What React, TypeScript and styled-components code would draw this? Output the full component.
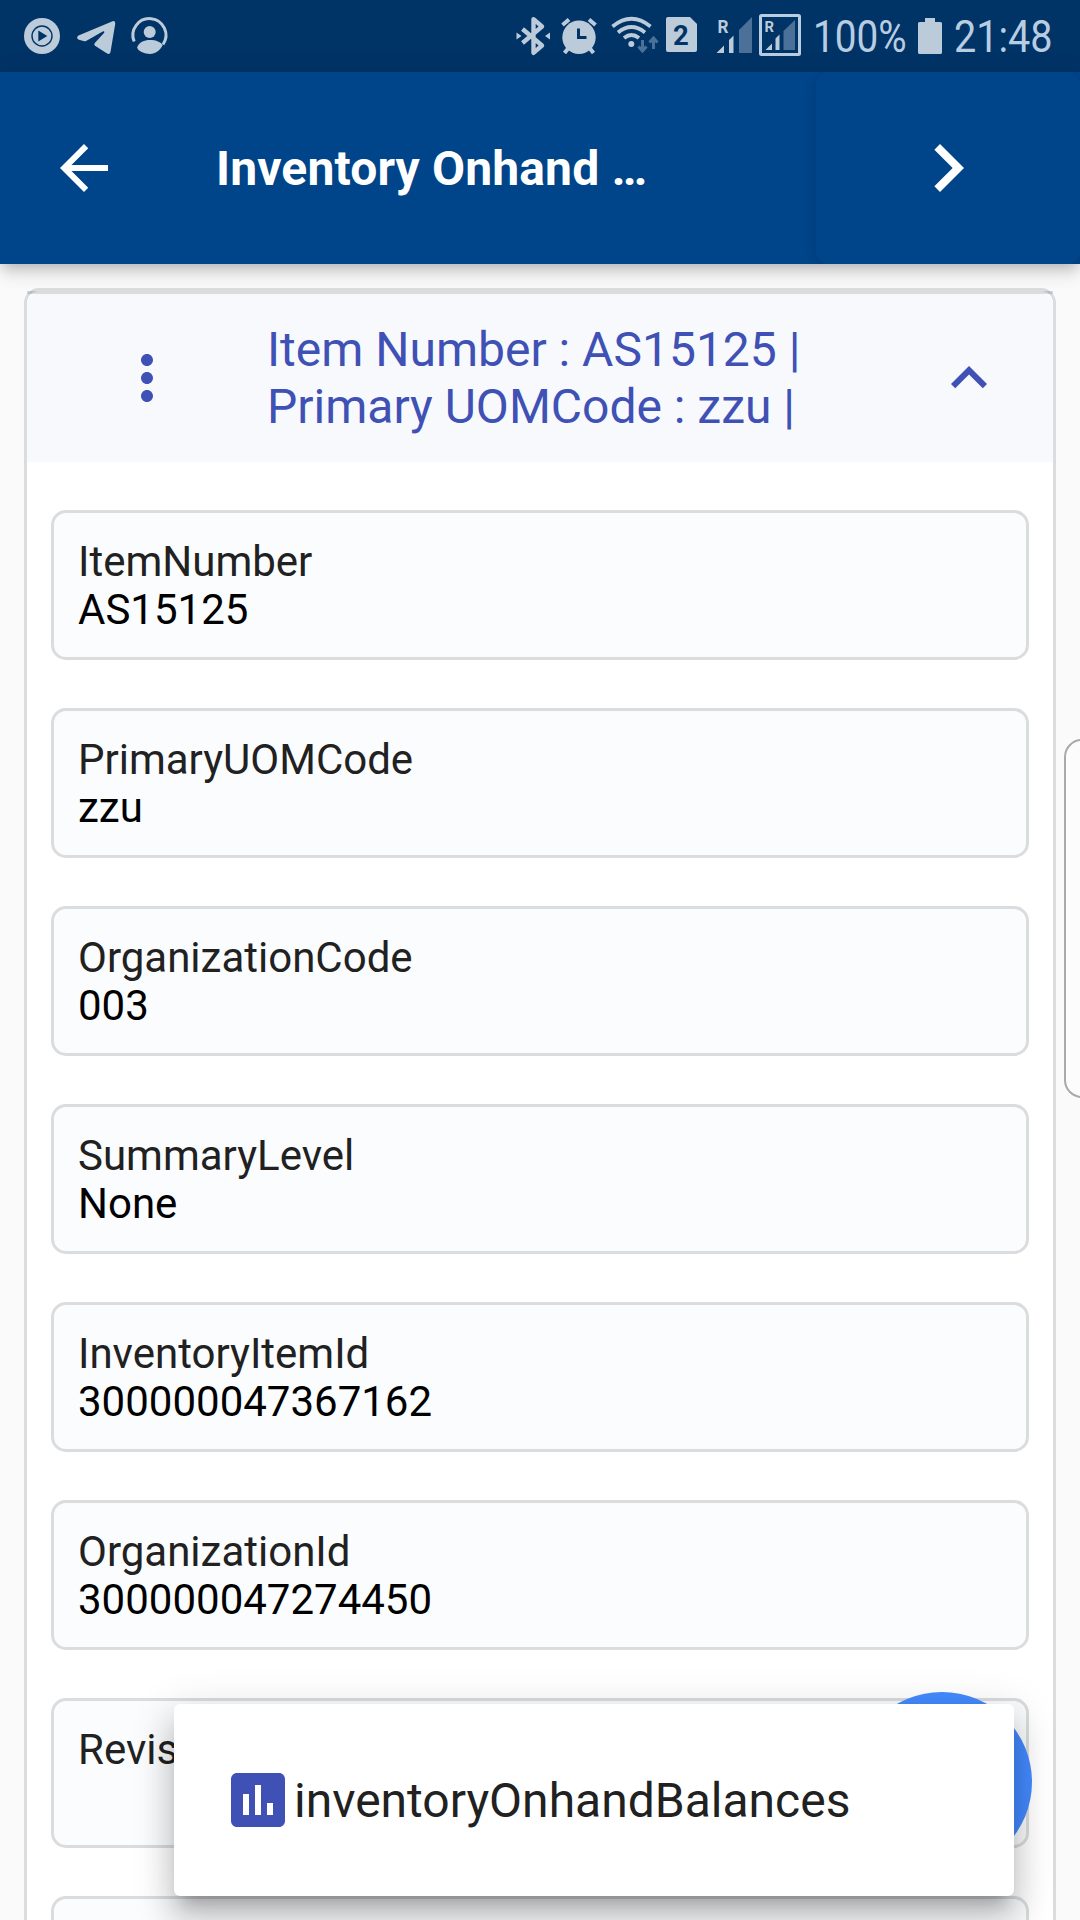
import React from "react";
import styled, { createGlobalStyle } from "styled-components";

const Global = createGlobalStyle`
  * { box-sizing: border-box; }
  html, body { margin: 0; height: 100%; }
  body { background: #fafafa; font-family: Roboto, "Noto Sans", sans-serif; overflow: hidden; }
  svg { display: block; }
`;

const Screen = styled.div`
  position: relative;
  display: flex;
  flex-direction: column;
  width: 1080px;
  height: 1920px;
  overflow: hidden;
  background: #fafafa;
`;

const StatusBar = styled.header`
  display: flex;
  justify-content: space-between;
  flex: none;
  height: 72px;
  background: #003366;
  color: #bccbda;
`;

const StatusGroup = styled.div`
  display: flex;
`;

const StatusText = styled.span<{ $width: number; $squeeze: number }>`
  display: block;
  width: ${(p) => p.$width}px;
  font-size: 45px;
  line-height: 74px;
  white-space: nowrap;
  color: #b9cde2;
  transform: scaleX(${(p) => p.$squeeze});
  transform-origin: left center;
`;

const BatteryGroup = styled.div`
  width: 36px;
`;

const AppBar = styled.nav`
  position: relative;
  z-index: 1;
  display: flex;
  align-items: center;
  flex: none;
  height: 192px;
  padding-left: 48px;
  background: #004489;
  color: #fff;
  box-shadow: 0 6px 12px -3px rgba(0, 0, 0, 0.2), 0 12px 15px rgba(0, 0, 0, 0.07), 0 3px 30px rgba(0, 0, 0, 0.06);
`;

const Title = styled.h1`
  flex: 1;
  margin: 0 0 0 96px;
  padding-top: 2px;
  font-size: 48px;
  font-weight: 700;
  letter-spacing: 0.14px;
  line-height: 60px;
  white-space: nowrap;
`;

const NextButton = styled.button`
  display: flex;
  align-items: center;
  justify-content: center;
  width: 264px;
  height: 192px;
  padding: 0;
  border: 0;
  border-radius: 12px;
  background: #004489;
  color: #fff;
  box-shadow: 0 3px 12px rgba(0, 0, 0, 0.13);
  clip-path: inset(0 0 0 -20px);
`;

const Card = styled.main`
  flex: none;
  width: 1032px;
  height: 1700px;
  margin: 24px 0 0 24px;
  border: 3px solid rgba(31, 43, 53, 0.165);
  border-radius: 15px;
  background: #fff;
`;

const CardRule = styled.div`
  height: 3px;
  background: rgba(31, 43, 53, 0.165);
`;

const CardHeader = styled.div`
  display: grid;
  grid-template-columns: 84px 156px 582px 1fr;
  align-items: center;
  height: 168px;
  border-radius: 9px 9px 0 0;
  background: #f7f9fc;
  color: #3f51b5;
`;

const HeaderIcon = styled.div`
  grid-column: 2;
`;

const ExpandIcon = styled.div`
  padding-left: 84px;
`;

const CardTitle = styled.div`
  font-size: 48px;
  line-height: 57px;
  white-space: nowrap;
`;

const CardTitleLine = styled.div``;

const FieldList = styled.div`
  display: flex;
  flex-direction: column;
  gap: 48px;
  padding: 48px 24px 0;
`;

const Field = styled.section`
  height: 150px;
  padding: 25px 24px 0;
  border: 3px solid #dadcde;
  border-radius: 15px;
  background: #fbfcfe;
  font-size: 42px;
  line-height: 48px;
`;

const FieldLabel = styled.div`
  color: #212121;
`;

const FieldValue = styled.div`
  color: #000;
`;

const ScrollThumb = styled.div`
  position: absolute;
  top: 739px;
  right: -20px;
  width: 36px;
  height: 359px;
  border: 2px solid #a9a9a9;
  border-radius: 18px;
  background: #fcfcfc;
`;

const Fab = styled.div`
  position: absolute;
  top: 1692px;
  left: 852px;
  width: 180px;
  height: 180px;
  border-radius: 50%;
  background: #448aff;
`;

const Popup = styled.div`
  position: absolute;
  top: 1704px;
  left: 174px;
  display: flex;
  align-items: center;
  width: 840px;
  height: 192px;
  padding-left: 48px;
  border-radius: 6px;
  background: #fff;
  color: #212121;
  font-size: 48px;
  white-space: nowrap;
  box-shadow: 0 15px 15px -9px rgba(0, 0, 0, 0.2), 0 24px 30px 3px rgba(0, 0, 0, 0.14),
    0 9px 42px 6px rgba(0, 0, 0, 0.12);
`;

const PopupIcon = styled.div`
  color: #3f51b5;
`;

const fields: [string, string][] = [
  ["ItemNumber", "AS15125"],
  ["PrimaryUOMCode", "zzu"],
  ["OrganizationCode", "003"],
  ["SummaryLevel", "None"],
  ["InventoryItemId", "300000047367162"],
  ["OrganizationId", "300000047274450"],
  ["Revision", ""],
  ["", ""],
];

const Glyph = ({ size, d }: { size: number; d: string }) => (
  <svg width={size} height={size} viewBox="0 0 24 24" fill="currentColor">
    <path d={d} />
  </svg>
);

const NotificationIcons = () => (
  <svg width="180" height="72" viewBox="0 0 180 72" fill="#bccbda">
    <circle cx="42" cy="36" r="18" />
    <circle cx="42" cy="36" r="10" fill="none" stroke="#003366" strokeWidth="1.4" />
    <path d="M38.3 30.5v11l9-5.5z" fill="#003366" />
    <path d="M78.5 35.5 112 21.4q3.5-1.2 3.2 2.6l-4.7 28q-.8 3-3.8 1.2L95 45.8q-1.5-1.2-.2-2.8l9.4-10.3q.5-2-1.5-1.2L86.5 40.7q-1.5.8-3.2.4l-5-1.7q-2.5-2 .2-3.9z" />
    <path d="M134.2 41.5A16.5 16.5 0 1 1 163 44.5" fill="none" stroke="#bccbda" strokeWidth="3" />
    <circle cx="149.7" cy="32" r="6" />
    <path d="M137.2 47.5C139 42 144 40 150 40s11 2 12.7 5.3C160 50.5 155.5 54 150 54s-12.5-3-12.8-6.5z" />
  </svg>
);

const SystemIcons = () => (
  <svg width="313" height="72" viewBox="500 0 313 72" fill="#bccbda">
    <path
      d="M522.5 29 542 45.500 533.500 52.800V19.200L542 26.500 522.500 43"
      fill="none"
      stroke="#bccbda"
      strokeWidth="4.4"
      strokeLinejoin="round"
    />
    <path d="m516.500 32.500 5 3.500-5 3.500zM550 32.500l-5 3.500 5 3.500z" />
    <circle cx="579" cy="37.300" r="16.700" />
    <path d="m562.500 25 6.500-5.500M595.500 25l-6.500-5.500M568.500 48l-4 5M589.500 48l4 5" stroke="#bccbda" strokeWidth="4" />
    <path d="M578.500 28.500v9h8" fill="none" stroke="#003366" strokeWidth="3" />
    <path d="M612.500 26.500q19-15.500 38 0M618 32.500q13.500-11 27 0M624 38q7.500-6 15 0" fill="none" stroke="#bccbda" strokeWidth="3.800" />
    <circle cx="631.300" cy="44" r="3" />
    <path d="M642.500 40v10M638.500 46.500l4 4.500 4-4.500M653.500 49V39M649.500 42.500l4-4.500 4 4.500" fill="none" stroke="#4b7199" strokeWidth="3" />
    <path d="M668 17h22l7 7v26q0 2-2 2h-27q-2 0-2-2V19q0-2 2-2z" />
    <text x="673" y="45.300" fontSize="27.500" fontWeight="700" fill="#003366" fontFamily="Roboto, sans-serif">2</text>
    <text x="717.500" y="32.500" fontSize="17.500" fontWeight="700" textLength="11" lengthAdjust="spacingAndGlyphs" fontFamily="Roboto, sans-serif">R</text>
    <path d="M716.500 53l7.500-7.500V53zM729 40l4.500-4.500V53H729z" />
    <path d="M739 53V30l13-13v36z" fill="#4b7199" />
    <rect x="760.500" y="15.500" width="39" height="39" rx="1" fill="none" stroke="#b9cde2" strokeWidth="3" />
    <text x="764.500" y="32" fontSize="15" fontWeight="700" textLength="9.500" lengthAdjust="spacingAndGlyphs" fontFamily="Roboto, sans-serif">R</text>
    <path d="M765.500 50l6.500-6.500V50zM775.500 38.500l4-4V50h-4z" />
    <path d="M783.500 50V31L795 20v30z" fill="#4b7199" />
  </svg>
);

const BatteryIcon = () => (
  <svg width="24" height="72" viewBox="0 0 24 72" fill="#bccbda">
    <path d="M7 18h10v4h5.500q1.500 0 1.500 1.500v29q0 1.500-1.500 1.500h-21Q0 54 0 52.500v-29Q0 22 1.500 22H7z" />
  </svg>
);

export default function App() {
  return (
    <Screen>
      <Global />
      <StatusBar>
        <StatusGroup>
          <NotificationIcons />
        </StatusGroup>
        <StatusGroup>
          <SystemIcons />
          <StatusText $width={105} $squeeze={0.86}>100%</StatusText>
          <BatteryGroup>
            <BatteryIcon />
          </BatteryGroup>
          <StatusText $width={126} $squeeze={0.88}>21:48</StatusText>
        </StatusGroup>
      </StatusBar>
      <AppBar>
        <Glyph size={72} d="M20 11H7.830l5.590-5.590L12 4l-8 8 8 8 1.410-1.410L7.830 13H20v-2z" />
        <Title>Inventory Onhand …</Title>
        <NextButton aria-label="Next">
          <Glyph size={96} d="M10 6 8.590 7.410 13.170 12l-4.580 4.590L10 18l6-6z" />
        </NextButton>
      </AppBar>
      <Card>
        <CardRule />
        <CardHeader>
          <HeaderIcon>
            <Glyph
              size={72}
              d="M12 8c1.100 0 2-.9 2-2s-.9-2-2-2-2 .9-2 2 .9 2 2 2zm0 2c-1.100 0-2 .9-2 2s.9 2 2 2 2-.9 2-2-.9-2-2-2zm0 6c-1.100 0-2 .9-2 2s.9 2 2 2 2-.9 2-2-.9-2-2-2z"
            />
          </HeaderIcon>
          <CardTitle>
            <CardTitleLine>Item Number : AS15125 |</CardTitleLine>
            <CardTitleLine>Primary UOMCode : zzu |</CardTitleLine>
          </CardTitle>
          <ExpandIcon>
            <Glyph size={72} d="M12 8l-6 6 1.410 1.410L12 10.830l4.590 4.580L18 14z" />
          </ExpandIcon>
        </CardHeader>
        <FieldList>
          {fields.map(([label, value], i) => (
            <Field key={i}>
              <FieldLabel>{label}</FieldLabel>
              <FieldValue>{value}</FieldValue>
            </Field>
          ))}
        </FieldList>
      </Card>
      <ScrollThumb />
      <Fab />
      <Popup>
        <PopupIcon>
          <Glyph
            size={72}
            d="M19 3H5c-1.100 0-2 .9-2 2v14c0 1.100.9 2 2 2h14c1.100 0 2-.9 2-2V5c0-1.100-.9-2-2-2zM9 17H7v-7h2v7zm4 0h-2V7h2v10zm4 0h-2v-4h2v4z"
          />
        </PopupIcon>
        inventoryOnhandBalances
      </Popup>
    </Screen>
  );
}
